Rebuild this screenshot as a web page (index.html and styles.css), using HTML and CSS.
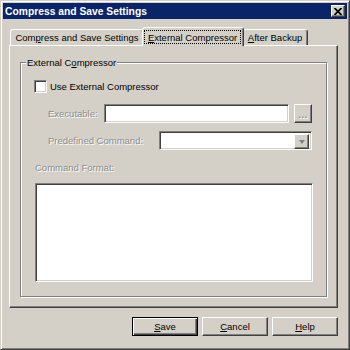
FILE: index.html
```html
<!DOCTYPE html>
<html lang="en">
<head>
  <meta charset="UTF-8" />
  <title>Compress and Save Settings</title>
  <link rel="stylesheet" href="styles.css">
</head>
<body>
  <div class="window">
    <div class="titlebar">
      <span class="title">Compress and Save Settings</span>
      <span class="close btn">
        <svg width="8" height="7" viewBox="0 0 8 7">
          <path d="M0.5 0 L7.5 7 M7.5 0 L0.5 7" stroke="#000" stroke-width="1.8" fill="none"/>
        </svg>
      </span>
    </div>

    <div class="dialog">
      <div class="tabs">
        <div class="tab tab-first">Com<u>p</u>ress and Save Settings</div>
        <div class="tab active"><span class="focus"><u>E</u>xternal Compressor</span></div>
        <div class="tab tab-last"><u>A</u>fter Backup</div>
      </div>

      <div class="panel">
        <fieldset class="group">
          <legend>External C<u>o</u>mpressor</legend>
          <div class="group-body">
            <label class="check-row">
              <span class="checkbox sunken"></span>
              <span>Use External Compressor</span>
            </label>
            <div class="field-row">
              <span class="label disabled exe-label">Executable:</span>
              <span class="sunken exe-input"></span>
              <span class="btn browse"><span class="disabled">...</span></span>
            </div>
            <div class="field-row">
              <span class="label disabled cmd-select-label">Predefined Command:</span>
              <span class="sunken combo">
                <span class="btn arrow"><span class="tri"></span></span>
              </span>
            </div>
            <div class="label disabled cmd-label">Command Format:</div>
            <div class="sunken cmd-text"></div>
          </div>
        </fieldset>
      </div>

      <div class="buttons">
        <span class="btn push default"><span><u>S</u>ave</span></span>
        <span class="btn push"><span><u>C</u>ancel</span></span>
        <span class="btn push"><span><u>H</u>elp</span></span>
      </div>
    </div>
  </div>
</body>
</html>
```

FILE: styles.css
```css
/* Base */
body { margin:0; font-family:"Liberation Sans", Arial, sans-serif; font-size:9.5px; color:#000; }
u { text-decoration:underline; text-underline-offset:1px; }

/* Window frame */
.window { width:350px; height:350px; box-sizing:border-box; background:#d4d0c8; border:1px solid; border-color:#d4d0c8 #404040 #404040 #d4d0c8; box-shadow:inset 1px 1px #fff, inset -1px -1px #808080; padding:2px; }
.titlebar { height:16px; background:#0a246a; color:#fff; display:flex; align-items:center; justify-content:space-between; padding:0 2px; }
.title { font-weight:bold; font-size:10.3px; }
.close { width:14px; height:12px; }

/* Shared 3D controls */
.btn { background:#d4d0c8; border:1px solid; border-color:#fff #404040 #404040 #fff; box-shadow:inset -1px -1px #808080; box-sizing:border-box; display:flex; align-items:center; justify-content:center; }
.sunken { background:#fff; border:1px solid; border-color:#808080 #fff #fff #808080; box-shadow:inset 1px 1px #404040, inset -1px -1px #d4d0c8; box-sizing:border-box; display:block; }
.disabled { color:#8c8c8c; text-shadow:1px 1px #fff; }

/* Tabs */
.dialog { padding:8px 0 0 6px; }
.tabs { display:flex; align-items:flex-end; height:18px; padding-left:1px; }
.tab { box-sizing:border-box; height:16px; background:#d4d0c8; border:1px solid; border-bottom:none; border-color:#fff #404040 transparent #fff; box-shadow:inset -1px 0 #808080; border-radius:3px 3px 0 0; display:flex; align-items:center; justify-content:center; }
.tab-first { width:134px; }
.tab-last { width:66px; }
.tab.active { width:102px; height:19px; margin:0 -2px -1px; position:relative; z-index:1; }
.focus { flex:1; align-self:stretch; margin:2px 2px 2px 1px; border:1px dotted #000; display:flex; align-items:center; justify-content:center; }

/* Panel and group */
.panel { width:329px; height:263px; box-sizing:border-box; border:1px solid; border-color:#fff #404040 #404040 #fff; box-shadow:inset -1px -1px #808080; padding:10px 0 0 10px; }
.group { width:307px; height:241px; box-sizing:border-box; margin:0; padding:0; min-width:0; border:1px solid #808080; box-shadow:inset 1px 1px #fff, 1px 1px #fff; }
.group legend { margin-left:5px; padding:0 1px; line-height:13px; background:#d4d0c8; }
.group-body { padding:11px 13px 0; }

.check-row { display:flex; align-items:center; gap:3px; height:13px; }
.checkbox { width:13px; height:13px; }
.field-row { display:flex; align-items:center; height:19px; padding-left:14px; margin-top:11px; }
.field-row + .field-row { margin-top:8px; }
.exe-label { width:56px; }
.cmd-select-label { width:111px; }
.exe-input { width:185px; height:19px; }
.browse { width:18px; height:19px; margin-left:5px; font-weight:bold; letter-spacing:0.5px; padding-top:2px; }
.combo { width:153px; height:19px; padding:2px; display:flex; justify-content:flex-end; }
.arrow { width:15px; height:15px; }
.tri { width:0; height:0; border-left:3.5px solid transparent; border-right:3.5px solid transparent; border-top:4px solid #808080; margin-top:1px; }
.cmd-label { line-height:13px; margin-top:11px; padding-left:1px; }
.cmd-text { width:278px; height:99px; margin:9px 0 0 1px; }

/* Dialog buttons */
.buttons { width:329px; display:flex; justify-content:flex-end; gap:4px; margin-top:9px; }
.push { width:66px; height:19px; }
.push.default { border-color:#000; box-shadow:inset 1px 1px #fff, inset -1px -1px #404040, inset -2px -2px #808080; }
```
